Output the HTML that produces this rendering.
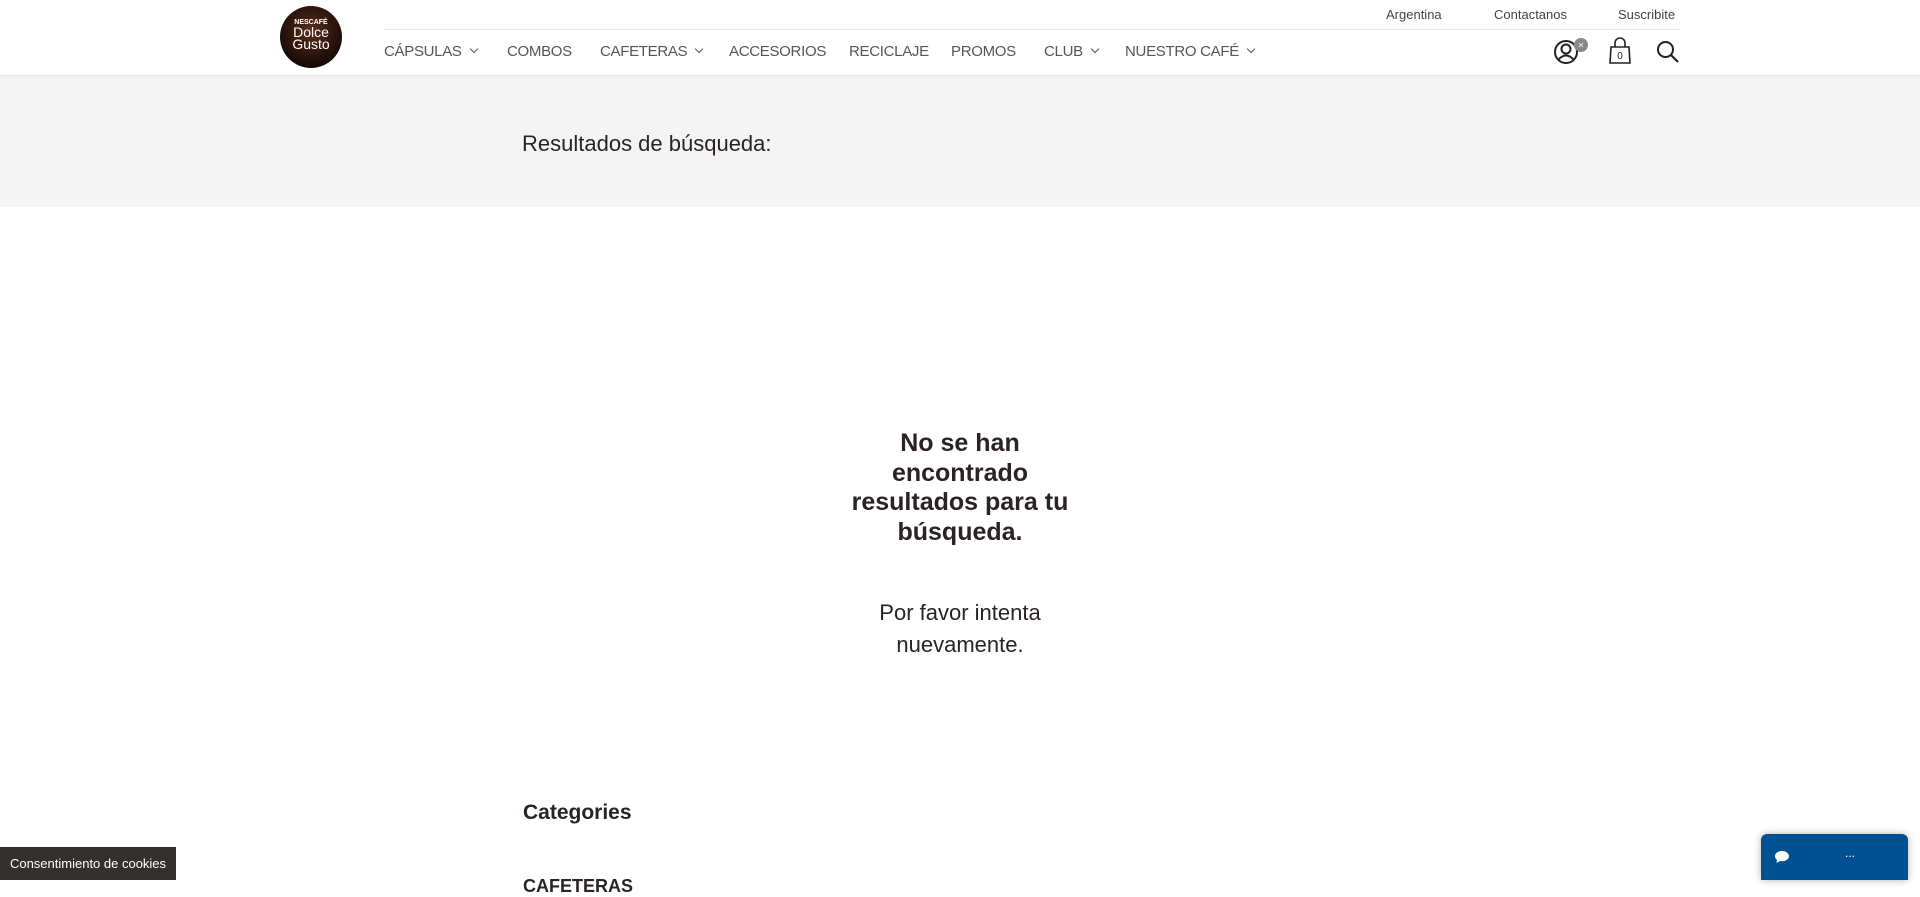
<!DOCTYPE html>
<html><head><meta charset="utf-8"><style>
*{margin:0;padding:0;box-sizing:border-box}
body{width:1920px;height:880px;overflow:hidden;background:#fff;font-family:"Liberation Sans",sans-serif;color:#2b2323;position:relative}
.a{position:absolute;white-space:nowrap}
.top{font-size:13px;color:#4a4040;top:7px}
.nav{font-size:15px;color:#5a5258;top:43px;letter-spacing:-0.3px}
.chev{display:inline-block;width:6px;height:6px;border-right:1.5px solid #5a5258;border-bottom:1.5px solid #5a5258;transform:rotate(45deg);margin-left:9px;position:relative;top:-4px}
</style></head><body>
<div class="a" style="left:0;top:75px;width:1920px;height:132px;background:#f4f4f4;border-top:1px solid #e8e8e8"></div>
<div class="a" style="left:280px;top:6px;width:62px;height:62px;border-radius:50%;background:radial-gradient(circle at 50% 40%,#5a2e1c,#1a0a05 70%);color:#fff;text-align:center;font-family:'Liberation Sans Narrow','Liberation Sans',sans-serif">
<div style="font-size:7px;font-weight:bold;margin-top:13px">NESCAFÉ</div>
<div style="font-size:14px;line-height:12px">Dolce<br>Gusto</div></div>
<div class="a top" style="left:1386px">Argentina</div>
<div class="a top" style="left:1494px">Contactanos</div>
<div class="a top" style="left:1618px">Suscribite</div>
<div class="a" style="left:384px;top:29px;width:1296px;height:1px;background:#e6e6e6"></div>
<div class="a nav" style="left:384px">CÁPSULAS<span class="chev"></span></div>
<div class="a nav" style="left:507px">COMBOS</div>
<div class="a nav" style="left:600px">CAFETERAS<span class="chev"></span></div>
<div class="a nav" style="left:729px">ACCESORIOS</div>
<div class="a nav" style="left:849px">RECICLAJE</div>
<div class="a nav" style="left:951px">PROMOS</div>
<div class="a nav" style="left:1044px">CLUB<span class="chev"></span></div>
<div class="a nav" style="left:1125px">NUESTRO CAFÉ<span class="chev"></span></div>
<svg class="a" style="left:1552px;top:36px" width="40" height="30" viewBox="0 0 40 30">
<circle cx="14" cy="16" r="11" fill="none" stroke="#222" stroke-width="2"/>
<circle cx="14" cy="13" r="4.5" fill="none" stroke="#222" stroke-width="2"/>
<path d="M6 24 Q14 15 22 24" fill="none" stroke="#222" stroke-width="2"/>
<circle cx="29" cy="9" r="7" fill="#888"/><path d="M27 7l4 4M31 7l-4 4" stroke="#ddd" stroke-width="1"/></svg>
<svg class="a" style="left:1608px;top:37px" width="24" height="28" viewBox="0 0 24 28">
<path d="M3 10h18l1 16H2z" fill="none" stroke="#222" stroke-width="1.6"/>
<path d="M7 10V6a5 5 0 0 1 10 0v4" fill="none" stroke="#222" stroke-width="1.6"/>
<text x="12" y="22" font-size="10" text-anchor="middle" font-family="Liberation Sans" fill="#222">0</text></svg>
<svg class="a" style="left:1656px;top:40px" width="24" height="24" viewBox="0 0 24 24">
<circle cx="9.5" cy="9.5" r="7.5" fill="none" stroke="#222" stroke-width="2"/><path d="M15 15l7 7" stroke="#222" stroke-width="2.2"/></svg>
<div class="a" style="left:0;top:75px;width:1920px;height:1px;background:#e6e6e6"></div>
<div class="a" style="left:522px;top:131px;font-size:22px;color:#2b2323">Resultados de búsqueda:</div>
<div class="a" style="left:810px;top:429px;width:300px;text-align:center;font-size:25px;font-weight:bold;line-height:29.5px;white-space:normal">No se han<br>encontrado<br>resultados para tu<br>búsqueda.</div>
<div class="a" style="left:810px;top:597px;width:300px;text-align:center;font-size:22px;line-height:32px;color:#2b2323">Por favor intenta<br>nuevamente.</div>
<div class="a" style="left:523px;top:801px;font-size:21px;font-weight:bold">Categories</div>
<div class="a" style="left:523px;top:876px;font-size:18px;font-weight:bold">CAFETERAS</div>
<div class="a" style="left:0;top:847px;width:176px;height:33px;background:#333030;color:#fff;font-size:13px;line-height:33px;text-align:center">Consentimiento de cookies</div>
<div class="a" style="left:1761px;top:834px;width:147px;height:46px;background:#005191;border-radius:6px 6px 0 0;box-shadow:0 0 8px rgba(0,0,0,.3)">
<svg style="position:absolute;left:13px;top:16px" width="16" height="14" viewBox="0 0 16 14"><path d="M8 1C4 1 1 3.3 1 6.2c0 1.5.8 2.8 2 3.7L2.5 13l3.5-2c.6.1 1.3.2 2 .2 4 0 7-2.3 7-5S12 1 8 1z" fill="#fff"/></svg>
<div style="position:absolute;left:84px;top:12px;color:#fff;font-size:12px">...</div></div>
</body></html>
